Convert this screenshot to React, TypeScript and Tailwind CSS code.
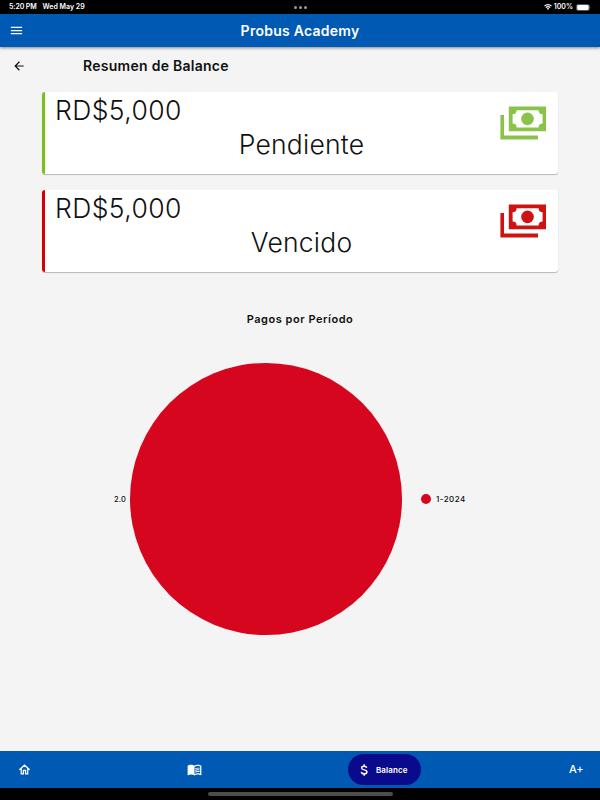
import { MdArrowBack, MdMenu, MdMenuBook } from "react-icons/md"

interface BalanceCardProps {
  amount: string
  label: string
  barClass: string
  iconClass: string
}

const cards: BalanceCardProps[] = [
  { amount: "RD$5,000", label: "Pendiente", barClass: "bg-[#7ac11e]", iconClass: "text-[#8bc34a]" },
  { amount: "RD$5,000", label: "Vencido", barClass: "bg-[#d50000]", iconClass: "text-[#d01212]" },
]

function MoneyIcon({ className }: { className: string }) {
  return (
    <svg width="46" height="34" viewBox="0 0 46 34" className={className} fill="currentColor">
      <path d="M.4 9h3.6v20.6H38v3.8H.4z" />
      <path
        fillRule="evenodd"
        d="M8.8.5H46v24.7H8.8zM16.6 4.2a4 4 0 0 1-4 4v9.3a4 4 0 0 1 4 4h22a4 4 0 0 1 4-4V8.2a4 4 0 0 1-4-4z"
      />
      <circle cx="27.5" cy="12.9" r="6.3" />
    </svg>
  )
}

function HomeIcon() {
  return (
    <svg viewBox="0 0 24 24" fill="none" stroke="currentColor" strokeWidth="2.3" className="ml-[18px] size-[13px]">
      <path d="M2.5 12.5 12 4l9.500 8.500M6 10v10h4v-6.500h4V20h4V10" />
    </svg>
  )
}

function DollarIcon() {
  return (
    <svg viewBox="0 0 24 24" fill="none" stroke="currentColor" strokeWidth="2.5" className="ml-[9px] size-[14px]">
      <path d="M16.6 8.5C16.2 6.2 14.500 5.500 12.2 5.500 9.600 5.500 7.900 6.600 7.900 8.500c0 4.500 9.100 2.200 9.100 6.900 0 2-1.900 3.100-4.600 3.100-2.900 0-4.700-1.100-5-3.300M12.300 2v3.500M12.300 18.500V22" />
    </svg>
  )
}

function BalanceCard({ amount, label, barClass, iconClass }: BalanceCardProps) {
  return (
    <div className="relative flex h-[82px] overflow-hidden rounded-[3px] bg-white shadow-[0_1px_1px_0_rgba(0,0,0,0.25)]">
      <div className={`w-[3px] ${barClass}`} />
      <div className="flex-1 px-[10px] text-[26.5px] leading-[34px] font-light">
        <div className="h-[35px] pt-px tracking-[0.4px]">{amount}</div>
        <div className="text-center tracking-[0.22px]">{label}</div>
      </div>
      <div className="absolute top-[14px] right-3">
        <MoneyIcon className={iconClass} />
      </div>
    </div>
  )
}

function StatusBar() {
  return (
    <div className="grid h-[14px] grid-cols-3 items-center bg-black px-[9px] text-[7px] font-semibold text-white">
      <div className="flex gap-[6px] pt-px">
        <span className="tracking-[-0.12px]">5:20 PM</span>
        <span>Wed May 29</span>
      </div>
      <div className="flex justify-center gap-[2px]">
        <i className="size-[3px] rounded-full bg-[#999]" />
        <i className="size-[3px] rounded-full bg-[#999]" />
        <i className="size-[3px] rounded-full bg-[#999]" />
      </div>
      <div className="flex items-center justify-end gap-[2px]">
        <svg width="8" height="6" viewBox="0 0 16 12" fill="none" stroke="white" strokeWidth="2.4">
          <path d="M1 4.2a10 10 0 0 1 14 0M3.7 7.2a6.2 6.2 0 0 1 8.6 0" />
          <path d="M5.5 9.2a3.7 3.7 0 0 1 5 0L8 12z" fill="white" stroke="none" />
        </svg>
        <span className="pt-px">100%</span>
        <svg width="15" height="7" viewBox="0 0 15 7" className="ml-px">
          <rect x=".4" y=".4" width="13" height="6.2" rx="1.8" fill="none" stroke="#888" strokeWidth=".7" />
          <rect x="1.1" y="1.1" width="11.6" height="4.8" rx="1.2" fill="white" />
          <path d="M14.1 2.4q.9 1.1 0 2.2z" fill="#888" />
        </svg>
      </div>
    </div>
  )
}

export default function App() {
  return (
    <div className="flex h-[800px] w-[600px] flex-col overflow-hidden bg-[#f4f4f4] font-['Inter',sans-serif] text-[#111]">
      <StatusBar />

      <header className="grid h-[33px] shrink-0 grid-cols-[120px_1fr_120px] items-center bg-[#0059b3] text-white shadow-[0_1px_3px_rgba(0,0,0,0.45)]">
        <MdMenu className="ml-[9px] size-[15px]" />
        <h1 className="text-center text-[14px] font-semibold tracking-[0.25px]">Probus Academy</h1>
      </header>

      <div className="flex h-[37px] items-center">
        <MdArrowBack className="ml-3 size-[14px]" />
        <h2 className="ml-[57px] text-[14px] font-semibold tracking-[0.27px]">Resumen de Balance</h2>
      </div>

      <main className="flex flex-1 flex-col px-[42px] pt-2">
        <div className="flex flex-col gap-4">
          {cards.map(card => (
            <BalanceCard key={card.label} {...card} />
          ))}
        </div>

        <h3 className="mt-[39px] text-center text-[11px] leading-4 font-semibold tracking-[0.53px]">Pagos por Período</h3>

        {/* Gráfico de pagos con su leyenda */}
        <div className="mt-9 flex items-center pl-[72px] text-[8px] font-medium">
          <span className="w-[15.5px] pt-px text-[7.5px] tracking-[0.2px]">2.0</span>
          <svg width="272" height="272" viewBox="0 0 272 272">
            <circle cx="136" cy="136" r="136" fill="#d6061f" />
          </svg>
          <i className="ml-[19px] size-[10.5px] rounded-full bg-[#d6061f]" />
          <span className="ml-[5px] tracking-[0.45px]">1-2024</span>
        </div>
      </main>

      <nav className="flex h-[37px] shrink-0 items-center bg-[#0059b3] text-white">
        <HomeIcon />
        <MdMenuBook className="ml-[156px] size-[15px]" />
        <div className="ml-[146px] flex h-[31px] w-[73px] items-center rounded-full bg-[#0a0a8c]">
          <DollarIcon />
          <span className="ml-[5px] text-[8px] font-semibold tracking-[0.1px]">Balance</span>
        </div>
        <span className="ml-[148px] text-[11px] font-medium tracking-[-0.3px]">A+</span>
      </nav>

      <div className="flex h-3 shrink-0 justify-center bg-black pt-1">
        <div className="h-[4px] w-[185px] rounded-full bg-[#4d4d4d]" />
      </div>
    </div>
  )
}
